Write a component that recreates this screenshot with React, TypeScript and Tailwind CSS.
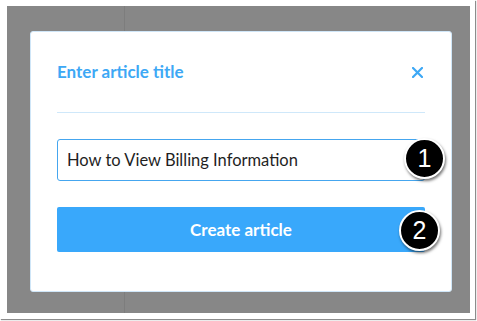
import React from 'react'

function StepBadge({ n, className }: { n: number; className: string }) {
  return (
    <div
      className={
        'absolute w-[41px] h-[41px] rounded-full bg-black border-[2.5px] border-white flex items-center justify-center shadow-[1px_2px_3px_rgba(0,0,0,0.55)] ' +
        className
      }
    >
      <span className="text-white text-[25px] leading-none font-['Liberation_Sans',Arial,sans-serif]">{n}</span>
    </div>
  )
}

export default function App() {
  return (
    <div className="w-[477px] h-[321px] bg-white font-['Lato',sans-serif]">
      <div className="w-[475px] h-[319px] bg-white pl-[7px] pt-[6px] shadow-[1px_1px_1px_rgba(0,0,0,0.45)]">
        <div className="relative w-[463px] h-[307px] bg-[#878787] flex">
          {/* page behind the overlay */}
          <div className="w-[118px] h-full border-r border-[#7d7d7d]" />
          <div className="flex-1" />

          {/* modal */}
          <div className="absolute inset-0 pl-[23px] pt-[25px]">
            <div className="w-[422px] h-[261px] bg-white border border-[#cfe6f8] rounded-[3px] px-[26px] pt-[30px]">
              <div className="flex items-center justify-between h-[20px]">
                <h2 className="text-[17px] font-bold text-[#3da8f5] leading-[20px]">Enter article title</h2>
                <svg width="11" height="11" viewBox="0 0 11 11" className="mr-[2px]">
                  <path d="M1 1L10 10M10 1L1 10" stroke="#3da8f5" strokeWidth="2.2" strokeLinecap="square" />
                </svg>
              </div>
              <div className="mt-[30px] h-px bg-[#cfe8fa]" />

              <div className="relative mt-[26px]">
                <div className="h-[42px] border border-[#45a6ef] rounded-[3px] pl-[9px] flex items-center text-[16.5px] text-[#1f1f1f]">
                  How to View Billing Information
                </div>
                <StepBadge n={1} className="right-[-20px] top-[-1px]" />
              </div>

              <div className="relative mt-[26px]">
                <button className="w-full h-[45px] bg-[#39a8fb] rounded-[2px] text-white text-[17px] font-bold">
                  Create article
                </button>
                <StepBadge n={2} className="right-[-15px] top-[3px]" />
              </div>
            </div>
          </div>
        </div>
      </div>
    </div>
  )
}
